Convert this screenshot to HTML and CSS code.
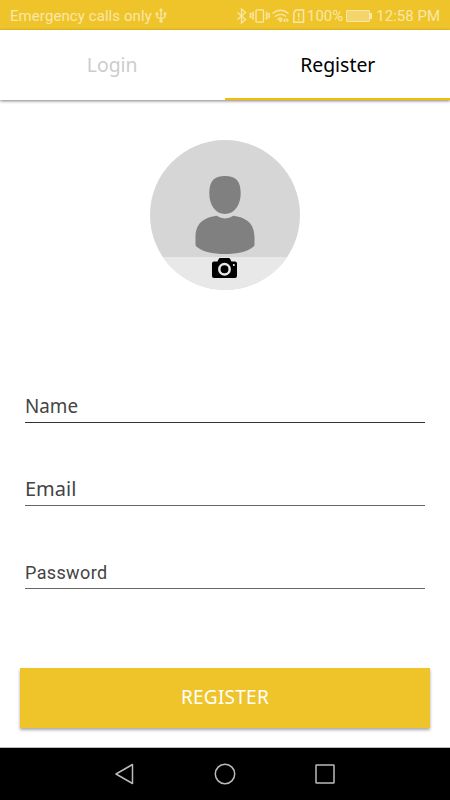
FILE: index.html
```html
<!DOCTYPE html>
<html lang="en">
<head>
<meta charset="utf-8">
<title>Register</title>
<link rel="stylesheet" href="styles.css">
</head>
<body>
<div class="screen">
  <header class="status">
    <span class="carrier">Emergency calls only</span>
    <svg class="usb" width="12" height="16" viewBox="0 0 12 16"><path d="M6 2v11M2 5v3.200q0 1.300 1.500 1.800L6 11l2.500-1Q10 9.500 10 8.200V5"/><path class="solid" d="M6 0l2 3H4zM.7 4.500h2.600v2.600H.7zM8.700 4.500h2.600v2.600H8.700zM4.500 12h3v2.500h-3z"/></svg>
    <svg class="icons" width="70" height="16" viewBox="0 0 70 16">
      <path d="M1.500 4.500l8 7L5.500 15V1l4 3.500-8 7"/>
      <rect x="20" y="1.800" width="7.500" height="12.400" rx="1"/>
      <path d="M17.600 4l-1.300 1.500 1.300 1.500-1.300 1.500 1.300 1.500-1.300 1.500M15 5l-1 1.300 1 1.300-1 1.300 1 1.300M30 4l1.300 1.500L30 7l1.300 1.500L30 10l1.300 1.500M32.500 5l1 1.300-1 1.300 1 1.300-1 1.300"/>
      <path d="M36.500 5.500q8-6.500 16 0M39 8.600q5.500-4.300 11 0M41.500 11.400q3-2.300 5 0"/>
      <path class="solid" d="M42.500 12.300l2 2 2-2q-2-1.600-4 0zM49.300 10v4.500L47 12.300zM50.500 10v4.500l2.300-2.200z"/>
      <path stroke-width="1.500" d="M57.800 4.500L60 2h7.500v12.200h-9.700zM62.700 5v4.500M62.700 10.800v1.500"/>
    </svg>
    <span class="percent">100%</span>
    <span class="battery"></span>
    <span class="clock">12:58 PM</span>
  </header>
  <nav class="tabs">
    <div class="tab"><span class="login">Login</span></div>
    <div class="tab active"><span class="register">Register</span></div>
  </nav>
  <main>
    <div class="avatar">
      <svg width="150" height="150" viewBox="0 0 150 150">
        <path fill="#808080" d="M75 36c11 0 15.700 5 15.700 17.500C90.700 65 84.500 74 75 74s-15.700-9-15.700-20.500C59.300 41 64 36 75 36zM66.500 75.800q8.500 5.200 17 0C97 78 104.500 83.500 104.500 98v6.500q0 1.500-1.500 2.500c-5 4.500-15.500 7-28 7s-23-2.500-28-7q-1.500-1-1.500-2.500V98c0-14.500 7.500-20 21-22.200z"/>
        <path fill="#e8e8e8" d="M0 117h150v33H0z"/>
        <path d="M67.500 121.500l1.200-2.500q.5-1 1.500-1h8.500q1 0 1.500 1l1.200 2.500H85q2 0 2 2V136q0 2-2 2H64q-2 0-2-2v-12.500q0-2 2-2z"/>
        <circle cx="74.500" cy="129.200" r="5.200" fill="none" stroke="#e8e8e8" stroke-width="2.500"/>
        <circle cx="83.800" cy="125" r="1" fill="#fff"/>
      </svg>
    </div>
    <form class="form">
      <div class="field name"><span>Name</span></div>
      <div class="field email"><span>Email</span></div>
      <div class="field password"><span>Password</span></div>
    </form>
    <div class="submit"><span>REGISTER</span></div>
  </main>
  <footer class="navbar">
    <svg width="22" height="22" viewBox="0 0 22 22"><path d="M18.500 1.500v19L2 11z"/></svg>
    <svg width="22" height="22" viewBox="0 0 22 22"><circle cx="11" cy="11" r="9.700"/></svg>
    <svg width="22" height="22" viewBox="0 0 22 22"><rect x="2" y="2" width="18" height="18" rx=".5"/></svg>
  </footer>
</div>
</body>
</html>
```
FILE: styles.css
```css
* { box-sizing: border-box; }
body { margin: 0; background: #fff; font-family: "Noto Sans", sans-serif; }
.screen { width: 450px; height: 800px; display: flex; flex-direction: column; overflow: hidden; }
.status {
  height: 30px; flex: none; display: flex; align-items: center; padding: 1px 10px 0;
  background: #efc42a; color: #f9e7aa; font: 15px/20px Roboto, sans-serif; white-space: nowrap;
}
.status svg { fill: none; stroke: #f9e7aa; stroke-width: 1.300; }
.status .solid { fill: #f9e7aa; stroke: none; }
.carrier { width: 142px; letter-spacing: .08px; }
.usb { margin-left: 3px; }
.icons { margin-left: 69px; }
.percent { width: 37px; margin-left: 1px; }
.battery {
  position: relative; width: 24px; height: 12px; margin-left: 2px;
  border: 1px solid #f9e7aa; border-radius: 1px; background: #f3d569;
}
.battery::after { content: ""; position: absolute; right: -3px; top: 2px; width: 2px; height: 6px; background: #f9e7aa; }
.clock { margin-left: auto; }
.tabs {
  height: 70px; flex: none; display: flex; position: relative; background: #fff;
  box-shadow: 0 1px 3px rgba(0, 0, 0, .5);
}
.tab { width: 225px; display: flex; justify-content: center; font-size: 20px; line-height: 28px; padding-top: 21px; color: #ccc; }
.tab.active { color: #000; }
.tab.active { background: linear-gradient(#f3bd00, #f3bd00) bottom / 100% 2.500px no-repeat; }
.tab span { transform: scaleX(.97); }
main { height: 648px; flex: none; padding: 40px 20px 0; border-bottom: 1px solid #bbb; }
.avatar { width: 150px; height: 150px; margin: 0 auto; border-radius: 50%; overflow: hidden; background: #d6d6d6; }
.avatar svg { display: block; }
.form { margin: 84px 5px 0; }
.field {
  height: 49px; margin-bottom: 34px; padding-top: 18px; border-bottom: 1px solid #333;
  font: 20px/28px "Noto Sans", sans-serif; color: #444;
}
.name span { display: inline-block; transform: scaleX(.94); transform-origin: left; }
.email, .password { border-bottom-color: #666; }
.password { margin-bottom: 0; padding-top: 19px; font: 18px/28px Roboto, sans-serif; letter-spacing: .37px; color: #444; }
.submit {
  height: 60px; margin-top: 79px; padding-bottom: 2px; display: flex; align-items: center; justify-content: center;
  background: #efc42a; color: #fff; font-size: 19px; letter-spacing: .25px; box-shadow: 0 2px 3px rgba(0, 0, 0, .35);
}
.navbar { height: 52px; flex: none; display: flex; justify-content: center; gap: 78px; padding-top: 15px; background: #000; }
.navbar svg { fill: none; stroke: #bbb; stroke-width: 1.500; stroke-linejoin: round; }
```
